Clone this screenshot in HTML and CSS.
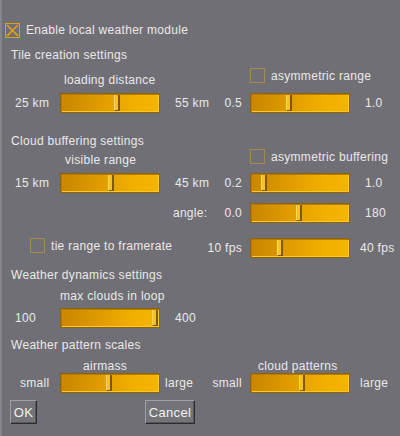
FILE: index.html
```html
<!DOCTYPE html>
<html>
<head>
<meta charset="utf-8">
<link rel="stylesheet" href="styles.css">
</head>
<body>
<div class="page">
  <div class="main-check">
    <span class="box checked"><svg viewBox="0 0 13 13" width="13" height="13"><path d="M1 1 L12 12 M12 1 L1 12" stroke="#e8a400" stroke-width="1.6" fill="none"/></svg></span>
    <span class="cb-text">Enable local weather module</span>
  </div>

  <div class="heading h-first">Tile creation settings</div>
  <div class="row cap-row cap1">
    <div class="half left"><span class="caption c-loading">loading distance</span></div>
    <div class="half right"><div class="check"><span class="box"></span><span class="cb-text">asymmetric range</span></div></div>
  </div>
  <div class="row slider-row">
    <div class="half left">
      <span class="lab-l">25 km</span>
      <div class="slider"><span class="knob" style="left:53px"></span></div>
      <span class="lab-r">55 km</span>
    </div>
    <div class="half right">
      <span class="lab-l">0.5</span>
      <div class="slider"><span class="knob" style="left:35px"></span></div>
      <span class="lab-r">1.0</span>
    </div>
  </div>

  <div class="heading h-next">Cloud buffering settings</div>
  <div class="row cap-row cap2">
    <div class="half left"><span class="caption c-visible">visible range</span></div>
    <div class="half right"><div class="check"><span class="box"></span><span class="cb-text">asymmetric buffering</span></div></div>
  </div>
  <div class="row slider-row">
    <div class="half left">
      <span class="lab-l">15 km</span>
      <div class="slider"><span class="knob" style="left:47px"></span></div>
      <span class="lab-r">45 km</span>
    </div>
    <div class="half right">
      <span class="lab-l">0.2</span>
      <div class="slider"><span class="knob" style="left:10px"></span></div>
      <span class="lab-r">1.0</span>
    </div>
  </div>
  <div class="row slider-row angle-row">
    <div class="half left"></div>
    <div class="half right">
      <span class="lab-l"><span class="angle-word">angle:</span><span>0.0</span></span>
      <div class="slider"><span class="knob" style="left:45px"></span></div>
      <span class="lab-r">180</span>
    </div>
  </div>
  <div class="row slider-row fps-row">
    <div class="half left">
      <div class="check tie"><span class="box"></span><span class="cb-text">tie range to framerate</span></div>
    </div>
    <div class="half right">
      <span class="lab-l">10 fps</span>
      <div class="slider"><span class="knob" style="left:26px"></span></div>
      <span class="lab-r lab-r-wide">40 fps</span>
    </div>
  </div>

  <div class="heading h-small">Weather dynamics settings</div>
  <div class="row cap-row cap3">
    <div class="half left"><span class="caption c-clouds">max clouds in loop</span></div>
  </div>
  <div class="row slider-row">
    <div class="half left">
      <span class="lab-l">100</span>
      <div class="slider"><span class="knob" style="left:91px"></span></div>
      <span class="lab-r">400</span>
    </div>
  </div>

  <div class="heading h-small">Weather pattern scales</div>
  <div class="row cap-row cap4">
    <div class="half left"><span class="caption c-airmass">airmass</span></div>
    <div class="half right"><span class="caption c-patterns">cloud patterns</span></div>
  </div>
  <div class="row slider-row">
    <div class="half left">
      <span class="lab-l lab-small">small</span>
      <div class="slider"><span class="knob" style="left:45px"></span></div>
      <span class="lab-r lab-large">large</span>
    </div>
    <div class="half right">
      <span class="lab-l">small</span>
      <div class="slider"><span class="knob" style="left:48px"></span></div>
      <span class="lab-r lab-r-wide">large</span>
    </div>
  </div>

  <div class="buttons">
    <button class="btn btn-ok">OK</button>
    <button class="btn btn-cancel">Cancel</button>
  </div>
</div>
</body>
</html>
```

FILE: styles.css
```css
html, body {
  margin: 0;
  padding: 0;
}
body {
  width: 400px;
  height: 436px;
  overflow: hidden;
  background: #716f76;
  font-family: "Liberation Sans", Arial, sans-serif;
  font-size: 12px;
  letter-spacing: 0.3px;
  color: #e9e9e9;
}
.page {
  box-sizing: border-box;
  width: 400px;
  height: 436px;
  border-left: 2px solid #85848a;
  padding-top: 22px;
}

/* checkboxes */
.box {
  box-sizing: border-box;
  width: 15px;
  height: 15px;
  border: 1.5px solid #a68a4c;
  display: inline-flex;
  align-items: center;
  justify-content: center;
  flex: none;
}
.box.checked {
  border-color: #e0a010;
}
.main-check {
  display: flex;
  align-items: center;
  height: 16px;
  padding-left: 3px;
  gap: 6px;
}
.check {
  display: flex;
  align-items: center;
  gap: 6px;
  white-space: nowrap;
}

/* headings */
.heading {
  line-height: 18px;
  height: 18px;
  padding-left: 9px;
}
.h-first { margin-top: 8px; }
.h-next { margin-top: 19px; }
.h-small { margin-top: 8px; }

/* rows */
.row {
  display: flex;
}
.half {
  display: grid;
  align-items: start;
}
.half.left {
  width: 198px;
  grid-template-columns: 58px 100px 40px;
}
.half.right {
  width: 200px;
  grid-template-columns: 50px 100px 50px;
}
.cap-row .half {
  display: flex;
  align-items: flex-start;
}
.caption {
  line-height: 16px;
  white-space: nowrap;
}
.cap1 { height: 29px; }
.cap1 .caption { margin-top: 8px; }
.cap1 .check { margin-top: 4px; margin-left: 50px; }
.cap2 { height: 23px; }
.cap2 .caption { margin-top: 2px; }
.cap2 .check { margin-top: -1px; margin-left: 50px; }
.cap3 { height: 24px; }
.cap3 .caption { margin-top: 4px; }
.cap4 { height: 19px; }
.cap4 .caption { margin-top: 5px; line-height: 14px; }

.c-loading { margin-left: 62px; }
.c-visible { margin-left: 63px; }
.c-clouds { margin-left: 58px; }
.c-airmass { margin-left: 81px; }
.c-patterns { margin-left: 58px; }

.slider-row {
  height: 20px;
  line-height: 20px;
}
.angle-row { margin-top: 10px; }
.fps-row { margin-top: 15px; }
.fps-row .half.left {
  display: flex;
}
.tie {
  margin-left: 28px;
  height: 15px;
}

.half.left .lab-l {
  padding-left: 13px;
  white-space: nowrap;
}
.half.left .lab-l.lab-small { padding-left: 18px; }
.half.left .lab-r {
  padding-left: 15px;
  white-space: nowrap;
}
.half.left .lab-r.lab-large { padding-left: 5px; }
.half.right .lab-l {
  display: flex;
  justify-content: flex-end;
  padding-right: 8px;
  white-space: nowrap;
}
.half.right .lab-r {
  padding-left: 15px;
  white-space: nowrap;
}
.half.right .lab-r.lab-r-wide { padding-left: 10px; }
.angle-word { margin-right: 17px; }

/* slider */
.slider {
  position: relative;
  box-sizing: border-box;
  width: 100px;
  height: 20px;
  border: 1px solid #8a6510;
  background: linear-gradient(to right, #c98600 0%, #e39f00 45%, #f2b000 75%, #f4b500 100%);
  box-shadow: inset 0 1px 0 #b77b00, inset 1px 0 0 #b77b00, inset -1px -1px 0 #ffc824;
}
.knob {
  position: absolute;
  top: 1px;
  bottom: 1px;
  width: 6px;
  box-sizing: border-box;
  background: #f7c21c;
  border-left: 1px solid #ffd95a;
  border-right: 2px solid #7d5806;
  border-bottom: 1px solid #7d5806;
}

/* buttons */
.buttons {
  display: flex;
  margin-top: 7px;
  padding-left: 8px;
}
.btn {
  box-sizing: border-box;
  height: 24px;
  padding: 0;
  font-family: "Liberation Sans", Arial, sans-serif;
  font-size: 13px;
  letter-spacing: 0.3px;
  color: #f2f2f2;
  background: #747378;
  border: 1px solid;
  border-color: #a09fa5 #2c2b30 #2c2b30 #a09fa5;
  box-shadow: inset -1px -1px 0 #56555a;
}
.btn-ok { width: 27px; }
.btn-cancel { width: 50px; margin-left: 108px; }
```
